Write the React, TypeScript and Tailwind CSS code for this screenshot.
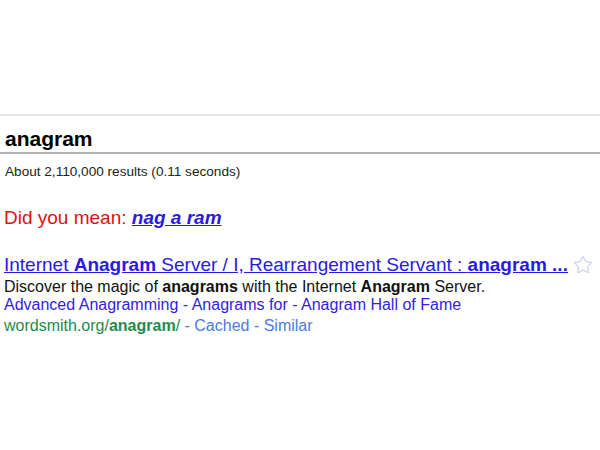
import { Star } from "lucide-react";

export default function App() {
  return (
    <div className="w-[600px] h-[450px] bg-white overflow-hidden font-['Liberation_Sans',Arial,sans-serif]">
      {/* search box */}
      <div className="mt-[114px] border-t-2 border-[#e5e5e5] border-b-2 border-b-[#b3b3b3] h-[40px] flex items-end pb-[3px] pl-[5px]">
        <span className="text-[21px] font-bold text-black leading-none">anagram</span>
      </div>
      <div className="pl-[5px] pt-[10px] text-[13.6px] text-[#222] leading-[15px]">
        About 2,110,000 results (0.11 seconds)
      </div>

      {/* spelling suggestion */}
      <div className="pl-[4px] mt-[28px] text-[19px] leading-[22px] text-[#dd1111]">
        Did you mean:{" "}
        <a className="text-[#2a1ae0] font-bold italic underline">nag a ram</a>
      </div>

      {/* result */}
      <div className="pl-[4px] mt-[25px]">
        <div className="flex items-center gap-[5px]">
          <a className="text-[19px] leading-[22px] text-[#2a1ae0] underline whitespace-nowrap">
            Internet <b>Anagram</b> Server / I, Rearrangement Servant : <b>anagram ...</b>
          </a>
          <Star className="w-[20px] h-[20px] text-[#c2d0ee]" strokeWidth={1.3} />
        </div>
        <div className="mt-[2px] text-[16px] leading-[18px] text-[#111] whitespace-nowrap">
          Discover the magic of <b>anagrams</b> with the Internet <b>Anagram</b> Server.
        </div>
        <div className="text-[16px] leading-[18px] text-[#3322dd] whitespace-nowrap">
          Advanced Anagramming - Anagrams for - Anagram Hall of Fame
        </div>
        <div className="mt-[2px] text-[16px] leading-[19px] text-[#1e8a4e] whitespace-nowrap">
          wordsmith.org/<b>anagram</b>/ <span className="text-[#4d7ae0]">- Cached - Similar</span>
        </div>
      </div>
    </div>
  );
}
